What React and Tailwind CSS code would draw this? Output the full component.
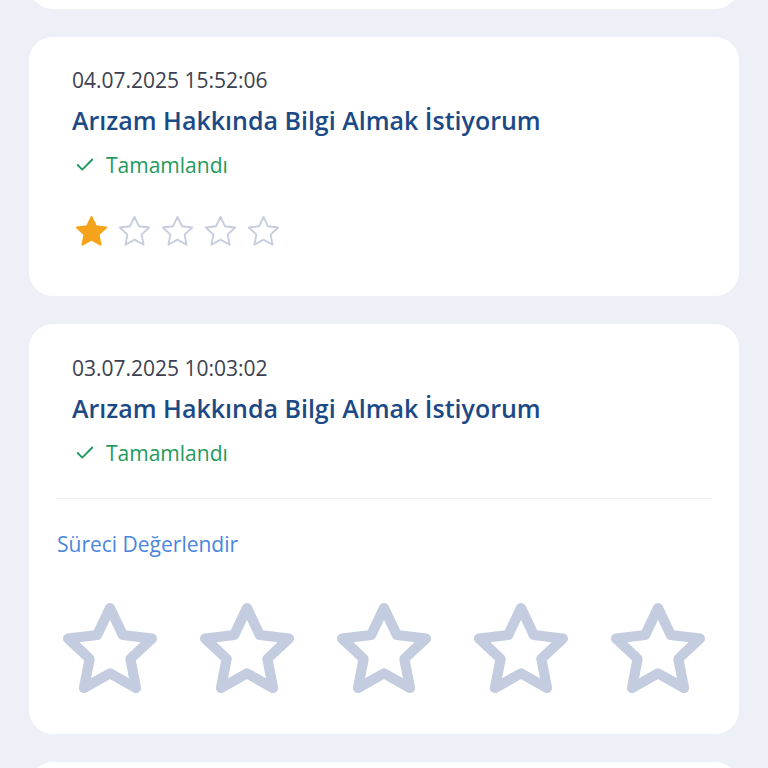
import { Check } from "lucide-react";

const STAR =
  "M12 2.5l2.9 6.1 6.6.8-4.9 4.6 1.3 6.6L12 17.3l-5.9 3.3 1.3-6.6-4.9-4.6 6.6-.8z";

function Star({ size, filled, stroke = 1.2, color = "#c6cddd" }) {
  return (
    <svg width={size} height={size} viewBox="0 0 24 24">
      <path
        d={STAR}
        fill={filled ? "#f5a31a" : "none"}
        stroke={filled ? "#f5a31a" : color}
        strokeWidth={stroke}
        strokeLinejoin="round"
      />
    </svg>
  );
}

function Header({ date }) {
  return (
    <div className="px-[43px]">
      <div className="text-[21px] leading-[28px] text-[#3b4150]">{date}</div>
      <div className="mt-[10px] text-[25px] leading-[32px] font-semibold text-[#1c4a86]">
        Arızam Hakkında Bilgi Almak İstiyorum
      </div>
      <div className="mt-[15px] flex items-center gap-[10px] text-[21px] leading-[28px] text-[#1f9a5c]">
        <Check size={22} strokeWidth={2} className="ml-[2px]" />
        <span>Tamamlandı</span>
      </div>
    </div>
  );
}

export default function App() {
  return (
    <div
      className="h-[768px] overflow-hidden bg-[#eef0f7] px-[29px] flex flex-col gap-[28px]"
      style={{ fontFamily: '"Open Sans", sans-serif' }}
    >
      <div className="h-[100px] -mt-[91px] shrink-0 rounded-[24px] bg-white" />

      <div className="shrink-0 rounded-[24px] bg-white pt-[29px] pb-[46px]">
        <Header date="04.07.2025 15:52:06" />
        <div className="mt-[34px] px-[43px] flex items-center gap-[6px] ml-[1px]">
          <Star size={37} filled />
          <Star size={37} />
          <Star size={37} />
          <Star size={37} />
          <Star size={37} />
        </div>
      </div>

      <div className="shrink-0 rounded-[24px] bg-white pt-[30px] pb-[31px]">
        <Header date="03.07.2025 10:03:02" />
        <div className="mx-[28px] mt-[31px] border-t border-[#eef0f4]" />
        <div className="mt-[31px] px-[28px] text-[21px] leading-[28px] text-[#4a86e0]">
          Süreci Değerlendir
        </div>
        <div className="mt-[39px] px-[28px] flex justify-between">
          {[0, 1, 2, 3, 4].map((i) => (
            <Star key={i} size={106} stroke={2.3} color="#c4cde0" />
          ))}
        </div>
      </div>

      <div className="h-[100px] shrink-0 rounded-[24px] bg-white" />
    </div>
  );
}
